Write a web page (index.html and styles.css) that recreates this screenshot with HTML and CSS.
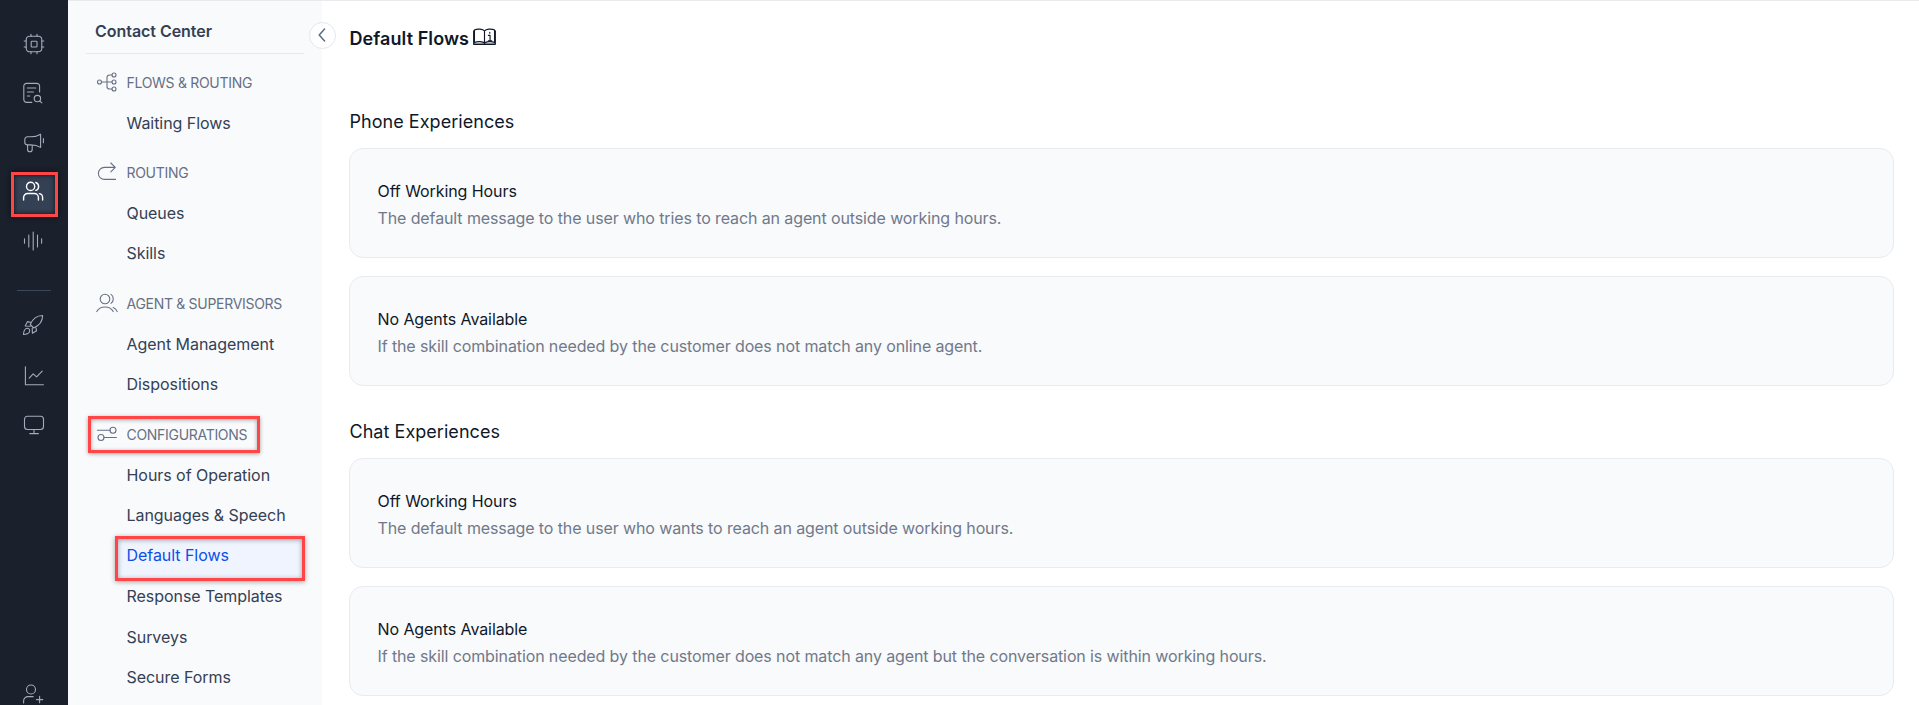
FILE: index.html
```html
<!DOCTYPE html>
<html lang="en">
<head>
<meta charset="utf-8">
<title>Default Flows</title>
<link rel="stylesheet" href="styles.css">
</head>
<body>
<div class="app">
  <nav class="rail">
    <a class="rail-item"><svg class="ico" viewBox="0 0 20 20"><rect x="2.2" y="2.2" width="15.6" height="15.6" rx="3.5"/><rect x="7.2" y="7.2" width="5.8" height="5.8" rx=".8"/><path d="M7 .2v2M13 .2v2M7 17.8v2M13 17.8v2M.2 7h2M.2 13h2M17.8 7h2M17.8 13h2"/></svg></a>
    <a class="rail-item"><svg class="ico shift" viewBox="0 0 20 20"><path d="M16.6 9V3.2A2.8 2.8 0 0 0 13.8.4H3.6A2.8 2.8 0 0 0 .8 3.2v13.4a2.8 2.8 0 0 0 2.8 2.8h5.2M4.4 5h8.4M4.4 9h6M4.4 13h2.4"/><circle cx="14.4" cy="15.6" r="3.2"/><path d="M16.8 18l2 1.8"/></svg></a>
    <a class="rail-item"><svg class="ico" viewBox="0 0 20 20"><path d="M16.6 1.2v13.2c-3-1.8-6-2.5-9.8-2.5H3.4A2.6 2.6 0 0 1 .8 9.3V6.4a2.6 2.6 0 0 1 2.6-2.6h3.4c3.8 0 6.8-.8 9.8-2.6zM3.6 12v4.5a2.3 2.3 0 0 0 4.6 0V12M19.4 5.6v4.2"/></svg></a>
    <a class="rail-item active"><svg class="ico shift" viewBox="0 0 20 20"><circle cx="7.6" cy="5.4" r="4.1"/><path d="M.6 19v-2.5a4 4 0 0 1 4-4h6.8a4 4 0 0 1 4 4V19M12.8 1.5a4.1 4.1 0 0 1 0 7.8M16.4 12.6c2 .4 3.2 2 3.2 4V19"/></svg></a>
    <a class="rail-item"><svg class="ico shift" viewBox="0 0 20 20"><path d="M1.5 7.8v4.4M5.8 4v12M10.2 1v18M14.5 4v12M18.6 7.8v4.4"/></svg></a>
    <span class="rail-line"></span>
    <a class="rail-item"><svg class="ico shift" viewBox="0 0 20 20"><path d="M7.2 9.5C9.5 4 14 .6 19.6.5c0 5.5-3.2 10-8.9 12.5zM8.2 7.5L4.6 6.6 2.2 11l5 .2M12.8 11.9l.8 3.9-4.2 2.4-.2-4.9M3 13.600c2.200-1.200 4.600 1 3.400 3.300C5.500 18.600 3 19.300.5 19.500.6 17 1.300 14.600 3 13.600z"/></svg></a>
    <a class="rail-item"><svg class="ico" viewBox="0 0 20 20"><path d="M1.4.8v18h18M5.2 12.2l4-4.4 3.4 3 5.6-5.6"/></svg></a>
    <a class="rail-item"><svg class="ico" viewBox="0 0 20 20"><rect x=".5" y="1.2" width="19" height="13.3" rx="3"/><path d="M10 14.5v4M5.8 18.6h8.6"/></svg></a>
    <a class="rail-item"><svg class="ico shift" viewBox="0 0 20 20"><circle cx="8" cy="5.5" r="4.5"/><path d="M.6 19v-2a4.4 4.4 0 0 1 4.4-4.4h5.2M13.4 15.6h6.4M16.6 12.4v6.4"/></svg></a>
  </nav>

  <aside class="sidebar">
    <h2 class="side-title">Contact Center</h2>
    <button class="collapse" aria-label="Collapse"><svg viewBox="0 0 8 14"><path d="M6.6 1L1.2 7l5.4 6"/></svg></button>
    <section class="group">
      <h3 class="group-head"><svg class="ico" viewBox="0 0 20 20"><circle cx="2.5" cy="10" r="2"/><circle cx="17" cy="3" r="2"/><circle cx="17" cy="10" r="2"/><circle cx="17" cy="17" r="2"/><path d="M4.5 10H15M15 3h-2.4A2.6 2.6 0 0 0 10 5.6v8.8a2.6 2.6 0 0 0 2.6 2.6H15"/></svg><span>FLOWS &amp; ROUTING</span></h3>
      <a class="item">Waiting Flows</a>
    </section>
    <section class="group">
      <h3 class="group-head"><svg class="ico" viewBox="0 0 20 20"><path d="M18.5 17.400H7.400a6 6 0 0 1 0-12h10.400M13.800 1l4.500 4.400-4.500 4.400"/></svg><span>ROUTING</span></h3>
      <a class="item">Queues</a>
      <a class="item">Skills</a>
    </section>
    <section class="group">
      <h3 class="group-head"><svg class="ico wide" viewBox="0 0 22 20"><circle cx="9" cy="6" r="4.8"/><path d="M.8 18.600c1.600-3.200 4.600-4.600 8.200-4.600s6.600 1.400 8.200 4.600M15 1.400c3 1.800 3 7.200 0 9M17.200 14.400c1.800.7 3.200 2 4 4.200"/></svg><span>AGENT &amp; SUPERVISORS</span></h3>
      <a class="item">Agent Management</a>
      <a class="item">Dispositions</a>
    </section>
    <section class="group">
      <h3 class="group-head marked"><svg class="ico" viewBox="0 0 20 20"><circle cx="16" cy="6.3" r="3"/><circle cx="4" cy="13.5" r="3"/><path d="M.4 6.3H13M7 13.5h12.4"/></svg><span>CONFIGURATIONS</span></h3>
      <a class="item">Hours of Operation</a>
      <a class="item">Languages &amp; Speech</a>
      <a class="item selected">Default Flows</a>
      <a class="item">Response Templates</a>
      <a class="item">Surveys</a>
      <a class="item">Secure Forms</a>
    </section>
  </aside>

  <main class="content">
    <h1 class="page-title">Default Flows<svg class="book" viewBox="0 0 24 18"><path d="M12 3C10.5.8 4.5.4 1.5 2v13c3-1.4 9-1.2 10.5.8 1.5-2 7.500-2.200 10.500-.8V2C19.500.4 13.500.8 12 3zM12 3v13"/><path class="base" d="M.8 3v13.800h22.400V3"/><path d="M16 7.500h1.800V13M16 13.200h3.600M17.500 4.300v1"/></svg></h1>
    <section class="block">
      <h2 class="block-title">Phone Experiences</h2>
      <article class="card"><h3>Off Working Hours</h3><p>The default message to the user who tries to reach an agent outside working hours.</p></article>
      <article class="card"><h3>No Agents Available</h3><p>If the skill combination needed by the customer does not match any online agent.</p></article>
    </section>
    <section class="block">
      <h2 class="block-title">Chat Experiences</h2>
      <article class="card"><h3>Off Working Hours</h3><p>The default message to the user who wants to reach an agent outside working hours.</p></article>
      <article class="card"><h3>No Agents Available</h3><p>If the skill combination needed by the customer does not match any agent but the conversation is within working hours.</p></article>
    </section>
  </main>
</div>
</body>
</html>
```
FILE: styles.css
```css
* { box-sizing: border-box; margin: 0; padding: 0; }
body {
  height: 705px;
  overflow: hidden;
  font-family: Inter, "Liberation Sans", sans-serif;
  font-size: 16px;
  background: #fff;
}
svg { fill: none; stroke: currentColor; stroke-linecap: round; stroke-linejoin: round; overflow: visible; }
.app { display: flex; height: 705px; overflow: hidden; }

.rail {
  flex: 0 0 68px;
  display: flex;
  flex-direction: column;
  align-items: center;
  background: #1a202c;
  color: #a3adbb;
  padding-top: 19px;
}
.rail-item { flex: 0 0 49px; width: 46px; display: flex; align-items: center; justify-content: center; }
.rail-item:nth-child(3) { padding-top: 2px; }
.ico { flex: none; width: 20px; height: 20px; stroke-width: 1.1; }
.shift { margin-right: 2px; }
.rail-item.active {
  flex-basis: 45px;
  width: 47px;
  margin: 6px 0 -1px 1px;
  padding-bottom: 7px;
  padding-right: 1px;
  background: #344054;
  color: #fff;
  border: 3px solid #ff4545;
  box-shadow: 0 0 5px rgba(0, 0, 0, .6), inset 0 0 5px rgba(0, 0, 0, .7);
}
.active .ico { stroke-width: 1.4; }
.rail-line { flex: 0 0 1px; width: 34px; margin: 25px 0 7px; background: #3b485c; }
.rail-line + .rail-item { flex-basis: 53px; }
.rail-item:last-child { margin-top: auto; height: 22px; flex-basis: 22px; }

.sidebar {
  position: relative;
  flex: 0 0 254px;
  min-width: 0;
  max-width: 254px;
  background: #f9fafc;
  border-top: 1px solid #e9eaed;
  padding: 0 18px;
}
.side-title {
  height: 53px;
  line-height: 61px;
  padding-left: 9px;
  font-size: 16px;
  font-weight: 600;
  letter-spacing: -.04px;
  color: #344054;
  border-bottom: 1px solid #e6e8ec;
}
.collapse {
  position: absolute;
  left: 241px;
  top: 21px;
  width: 27px;
  height: 27px;
  border: 1px solid #e4e7ec;
  border-radius: 50%;
  background: #fff;
  color: #5d6b82;
  display: flex;
  align-items: center;
  justify-content: center;
}
.collapse svg { width: 8px; height: 14px; stroke-width: 1.5; margin: 0 2px 1px 0; }
.group { padding-top: 9.200px; }
.side-title ~ .collapse + .group { padding-top: 8px; }
.group-head {
  display: flex;
  align-items: center;
  gap: 9.500px;
  height: 40.500px;
  padding-left: 11px;
  font-size: 14px;
  font-weight: 400;
  letter-spacing: -.3px;
  color: #667085;
}
.group-head .wide { width: 22px; margin: 0 -1px; }
.item {
  display: flex;
  align-items: center;
  height: 40.500px;
  padding-left: 40.500px;
  color: #344054;
  letter-spacing: -.05px;
  white-space: nowrap;
}
.marked {
  width: 172px;
  height: 37px;
  margin: 2px 0 1.800px 2px;
  padding-left: 6px;
  border: 3px solid #ff4545;
  box-shadow: 0 1px 4px rgba(0, 0, 0, .35), inset 0 1px 4px rgba(0, 0, 0, .35);
}
.selected {
  width: 190px;
  height: 45px;
  margin: .5px 0 -5px 29px;
  padding: 0 0 6px 8.500px;
  color: #0b4fe8;
  background: #eff4ff;
  border: 3px solid #ff4545;
  box-shadow: 0 1px 5px rgba(0, 0, 0, .35), inset 0 1px 5px rgba(0, 0, 0, .35);
}

.content { flex: 1; border-top: 1px solid #e9eaed; padding: 25px 25px 0 27px; color: #101828; }
.page-title { display: flex; align-items: center; height: 24px; padding-left: .5px; font-size: 18px; font-weight: 600; letter-spacing: .08px; }
.book { width: 23px; height: 17.500px; margin: 0 0 3px 3.500px; stroke-width: 1.200; }
.book .base { stroke-width: 1.400; }
.block { display: flex; flex-direction: column; gap: 18px; padding-top: 60px; }
.block + .block { padding-top: 34px; }
.block-title { height: 24px; line-height: 24px; margin-bottom: -4px; padding-left: .5px; font-size: 18px; font-weight: 400; letter-spacing: .04px; }
.card {
  height: 110px;
  padding: 29px 27.500px;
  border: 1px solid #e9ebf0;
  border-radius: 14px;
  background: #f9fafc;
}
.card h3 { font-size: 16px; font-weight: 400; line-height: 27px; letter-spacing: -.08px; }
.card p { font-size: 16px; font-weight: 400; line-height: 27px; letter-spacing: -.11px; color: #70798a; }
```
